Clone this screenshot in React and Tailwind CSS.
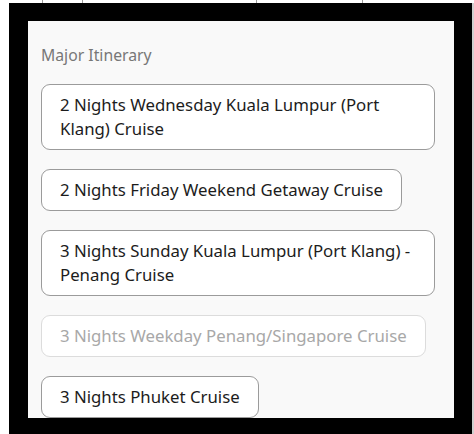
import React from 'react';

const itineraries = [
  { lines: ['2 Nights Wednesday Kuala Lumpur (Port', 'Klang) Cruise'], full: true },
  { lines: ['2 Nights Friday Weekend Getaway Cruise'] },
  { lines: ['3 Nights Sunday Kuala Lumpur (Port Klang) -', 'Penang Cruise'], full: true },
  { lines: ['3 Nights Weekday Penang/Singapore Cruise'], disabled: true },
  { lines: ['3 Nights Phuket Cruise'] },
];

function ItineraryButton({ item }) {
  return (
    <button
      type="button"
      disabled={item.disabled}
      className={`text-left rounded-[9px] border bg-white px-[18px] py-2 text-[16.8px] leading-6 ${item.full ? 'w-full' : ''} ${
        item.disabled ? 'border-[#dcdcdc] text-[#a8a8a8]' : 'border-[#9b9b9b] text-[#1c1c1c]'
      }`}
    >
      {item.lines.map((line, i) => (
        <span key={i} className="block whitespace-nowrap">
          {line}
        </span>
      ))}
    </button>
  );
}

export default function App() {
  return (
    <div className="w-[474px] h-[434px] bg-white overflow-hidden" style={{ fontFamily: '"Noto Sans", "Open Sans", sans-serif' }}>
      {/* leftover table row from the screen above */}
      <div className="h-[3px] flex pl-[42px]">
        <div className="w-[40px] border-l border-[#9a9a9a]" />
        <div className="w-[174px] border-l border-[#9a9a9a]" />
        <div className="w-[106px] border-l border-[#9a9a9a]" />
        <div className="border-l border-[#9a9a9a]" />
      </div>
      <div className="flex h-[431px]">
        <div className="w-[9px] bg-white" />
        <div className="w-[463px] bg-black pt-[18px] pl-[19px] pr-[18px]">
          <div className="h-[397px] bg-[#f9f9f9] overflow-hidden pl-[13px] pr-[19px] pt-[22px]">
            <p className="text-[15.75px] leading-6 text-[#777777]">Major Itinerary</p>
            <div className="mt-[17px] flex flex-col items-start gap-[19px]">
              {itineraries.map((item, i) => (
                <ItineraryButton key={i} item={item} />
              ))}
            </div>
          </div>
        </div>
        <div className="w-[2px] bg-[#cfcfcf]" />
      </div>
    </div>
  );
}
